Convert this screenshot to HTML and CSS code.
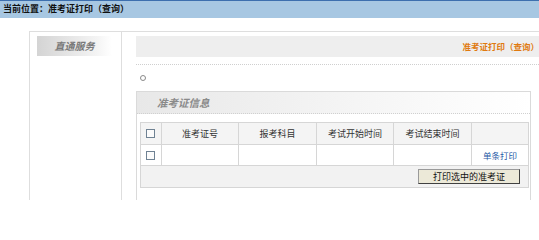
FILE: index.html
```html
<!DOCTYPE html>
<html lang="zh-CN">
<head>
<meta charset="utf-8">
<title>准考证打印</title>
<link rel="stylesheet" href="styles.css">
</head>
<body>
<div class="topbar">当前位置：准考证打印（查询）</div>
<div class="main">
  <div class="side">
    <div class="side-title">直通服务</div>
  </div>
  <div class="content">
    <div class="page-bar">准考证打印（查询）</div>
    <div class="dots"></div>
    <div class="note"><span class="ring"></span></div>
    <div class="box">
      <div class="box-head">准考证信息</div>
      <table class="grid">
        <colgroup>
          <col class="c1"><col class="c2"><col class="c3"><col class="c4"><col class="c5"><col class="c6">
        </colgroup>
        <tr class="head">
          <td><input type="checkbox" class="chk"></td>
          <td>准考证号</td>
          <td>报考科目</td>
          <td>考试开始时间</td>
          <td>考试结束时间</td>
          <td></td>
        </tr>
        <tr class="row">
          <td><input type="checkbox" class="chk"></td>
          <td></td>
          <td></td>
          <td></td>
          <td></td>
          <td><a class="link" href="#">单条打印</a></td>
        </tr>
        <tr class="foot">
          <td colspan="6"><button class="btn" type="button">打印选中的准考证</button></td>
        </tr>
      </table>
    </div>
  </div>
</div>
</body>
</html>
```

FILE: styles.css
```css
html, body {
  margin: 0;
  padding: 0;
  background: #ffffff;
  font-family: "Noto Sans CJK SC", "Noto Sans", sans-serif;
  font-size: 9px;
  color: #333;
}
html {
  height: 200px;
  overflow: hidden;
}
body {
  height: 200px;
  overflow: hidden;
}
.topbar {
  height: 17px;
  border-top: 1px solid #3d6fae;
  background: #a7c7e2;
  font-weight: bold;
  color: #111;
  line-height: 16px;
  padding-left: 3px;
}
.main {
  margin: 13px 0 0 29px;
  border-top: 1px solid #dedede;
  border-left: 1px solid #dedede;
  display: flex;
  height: 169px;
}
.side {
  width: 92px;
  border-right: 1px solid #dedede;
  padding: 4px 0 0 7px;
  box-sizing: border-box;
  flex: none;
}
.side-title {
  width: 75px;
  height: 20px;
  line-height: 20px;
  background: linear-gradient(to right, #d4d4d4, #f4f4f4 80%, #ffffff);
  text-align: center;
  font-style: italic;
  font-weight: bold;
  font-size: 10px;
  color: #7a7a7a;
}
.content {
  flex: none;
  width: 409px;
  padding: 4px 0 0 14px;
}
.page-bar {
  height: 21px;
  line-height: 21px;
  background: #eeeeee;
  text-align: right;
  padding-right: 6px;
  font-weight: bold;
  font-size: 8.5px;
  color: #e07a10;
}
.dots {
  margin-top: 7px;
  border-top: 1px dotted #cfcfcf;
}
.note {
  height: 26px;
  padding-left: 4px;
  display: flex;
  align-items: center;
}
.ring {
  width: 4px;
  height: 4px;
  border: 1px solid #8a8a8a;
  border-radius: 50%;
}
.box {
  border: 1px solid #dadada;
  height: 140px;
  width: 393px;
}
.box-head {
  height: 21px;
  line-height: 21px;
  padding-left: 20px;
  background: linear-gradient(to right, #e8e8e8, #f6f6f6 60%, #ffffff);
  border-bottom: 1px dotted #d0d0d0;
  font-style: italic;
  font-weight: bold;
  font-size: 10.5px;
  color: #8a8a8a;
}
.grid {
  margin: 8px 0 0 3px;
  width: 388px;
  border-collapse: collapse;
  table-layout: fixed;
}
.c1 { width: 21px; }
.c2 { width: 77px; }
.c3 { width: 78px; }
.c4 { width: 77px; }
.c5 { width: 78px; }
.c6 { width: 57px; }
.grid td {
  border: 1px solid #d6d6d6;
  padding: 0;
  text-align: center;
  color: #333;
}
.head td {
  height: 21px;
  background: #f4f4f4;
}
.row td {
  height: 20px;
  background: #ffffff;
}
.foot td {
  height: 21px;
  background: #f2f2f2;
  text-align: right;
  padding-right: 8px;
}
.chk {
  appearance: none;
  -webkit-appearance: none;
  width: 9px;
  height: 9px;
  margin: 0;
  border: 1px solid #6f8293;
  background: #fbfbfb;
  vertical-align: middle;
  display: block;
  margin-left: 5px;
}
.link {
  color: #1f5aa6;
  text-decoration: none;
  font-size: 8.5px;
}
.btn {
  width: 102px;
  height: 15px;
  padding: 0;
  font-family: "Noto Sans CJK SC", sans-serif;
  font-size: 9px;
  line-height: 13px;
  color: #111;
  background: #ece9d8;
  border: 1px solid;
  border-color: #9a9a9a #404040 #404040 #9a9a9a;
  display: inline-block;
  vertical-align: middle;
}
```
